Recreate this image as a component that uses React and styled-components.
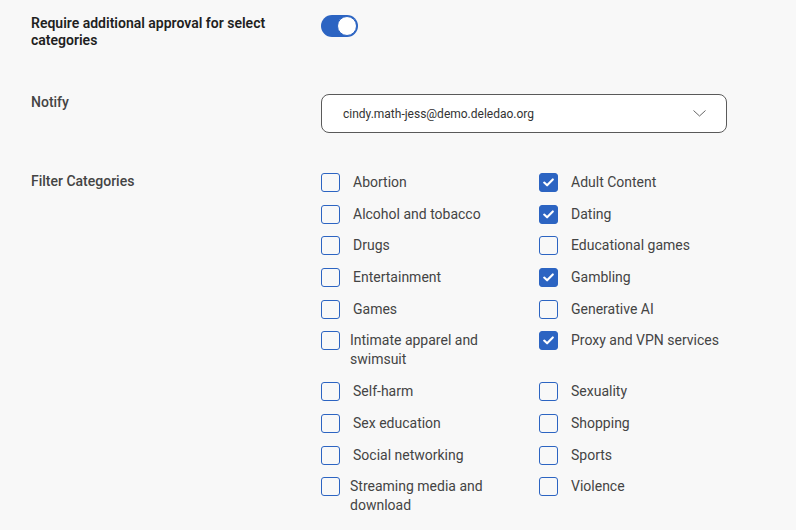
import React, { useState } from 'react';
import styled, { createGlobalStyle } from 'styled-components';

const GlobalStyle = createGlobalStyle`
  body {
    margin: 0;
    background: #f8f8f8;
    font-family: Roboto, "Liberation Sans", Arial, sans-serif;
    color: #3a3a3a;
  }
`;

const Page = styled.div`
  padding: 15px 0 0 31px;
  width: 796px;
  height: 530px;
  box-sizing: border-box;
  overflow: hidden;
`;

const SettingRow = styled.div`
  display: grid;
  grid-template-columns: 290px 406px;
  margin-bottom: ${p => p.$spacing || 0}px;
`;

const Label = styled.div`
  font-size: 14px;
  line-height: 17px;
  font-weight: ${p => (p.$strong ? 600 : 500)};
  color: ${p => (p.$strong ? '#1f1f1f' : '#444')};
  padding-top: ${p => p.$offset || 0}px;
  width: 250px;
`;

const Switch = styled.button`
  position: relative;
  width: 37px;
  height: 22px;
  border: none;
  padding: 0;
  border-radius: 11px;
  background: #2c64c2;
  cursor: pointer;

  &::after {
    content: '';
    position: absolute;
    top: 1px;
    left: ${p => (p.$on ? '16px' : '1px')};
    width: 18px;
    height: 18px;
    border-radius: 50%;
    background: #fff;
    border: 1px solid #2c64c2;
  }
`;

const Select = styled.div`
  display: flex;
  align-items: center;
  justify-content: space-between;
  height: 39px;
  box-sizing: border-box;
  padding: 0 20px 0 21px;
  border: 1px solid #5a5a5a;
  border-radius: 8px;
  background: #fff;
  font-size: 12px;
  color: #333;
`;

const CategoryGrid = styled.div`
  display: grid;
  grid-template-columns: 218px 188px;
  row-gap: 12.7px;
`;

const Option = styled.label`
  display: flex;
  align-items: flex-start;
  gap: ${p => (p.$tight ? 10 : 13)}px;
  font-size: 14px;
  line-height: 19px;
  color: #444;
  cursor: pointer;
`;

const Box = styled.span`
  flex: none;
  width: 19px;
  height: 19px;
  box-sizing: border-box;
  border-radius: 3px;
  border: 1.5px solid #2c64c2;
  background: ${p => (p.$checked ? '#2c64c2' : 'transparent')};
  display: flex;
  align-items: center;
  justify-content: center;
`;

const OptionText = styled.span`
  max-width: 150px;
`;

const left = [
  'Abortion',
  'Alcohol and tobacco',
  'Drugs',
  'Entertainment',
  'Games',
  'Intimate apparel and swimsuit',
  'Self-harm',
  'Sex education',
  'Social networking',
  'Streaming media and download',
];

const right = [
  'Adult Content',
  'Dating',
  'Educational games',
  'Gambling',
  'Generative AI',
  'Proxy and VPN services',
  'Sexuality',
  'Shopping',
  'Sports',
  'Violence',
];

const initialChecked = ['Adult Content', 'Dating', 'Gambling', 'Proxy and VPN services'];

function Check() {
  return (
    <svg width="11" height="9" viewBox="0 0 11 9" fill="none">
      <path d="M1.2 4.6 L4.1 7.3 L9.8 1.4" stroke="#fff" strokeWidth="2.1" strokeLinecap="round" strokeLinejoin="round" />
    </svg>
  );
}

function Chevron() {
  return (
    <svg width="13" height="7" viewBox="0 0 13 7" fill="none">
      <path d="M0.5 0.5 L6.5 6 L12.5 0.5" stroke="#666" strokeWidth="1" />
    </svg>
  );
}

export default function App() {
  const [enabled, setEnabled] = useState(true);
  const [checked, setChecked] = useState(initialChecked);

  const toggle = name =>
    setChecked(c => (c.includes(name) ? c.filter(n => n !== name) : [...c, name]));

  // interleave the two columns so the grid fills row by row
  const rows = left.flatMap((l, i) => [l, right[i]]);

  return (
    <Page>
      <GlobalStyle />
      <SettingRow $spacing={45}>
        <Label $strong>Require additional approval for select categories</Label>
        <div>
          <Switch $on={enabled} onClick={() => setEnabled(!enabled)} />
        </div>
      </SettingRow>

      <SettingRow $spacing={40}>
        <Label $offset={-1}>Notify</Label>
        <Select>
          <span>cindy.math-jess@demo.deledao.org</span>
          <Chevron />
        </Select>
      </SettingRow>

      <SettingRow>
        <Label>Filter Categories</Label>
        <CategoryGrid>
          {rows.map((name, i) => {
            const isLeft = i % 2 === 0;
            const long = isLeft && name.length > 22;
            return (
              <Option key={name} $tight={long} onClick={() => toggle(name)}>
                <Box $checked={checked.includes(name)}>
                  {checked.includes(name) && <Check />}
                </Box>
                <OptionText>{name}</OptionText>
              </Option>
            );
          })}
        </CategoryGrid>
      </SettingRow>
    </Page>
  );
}
